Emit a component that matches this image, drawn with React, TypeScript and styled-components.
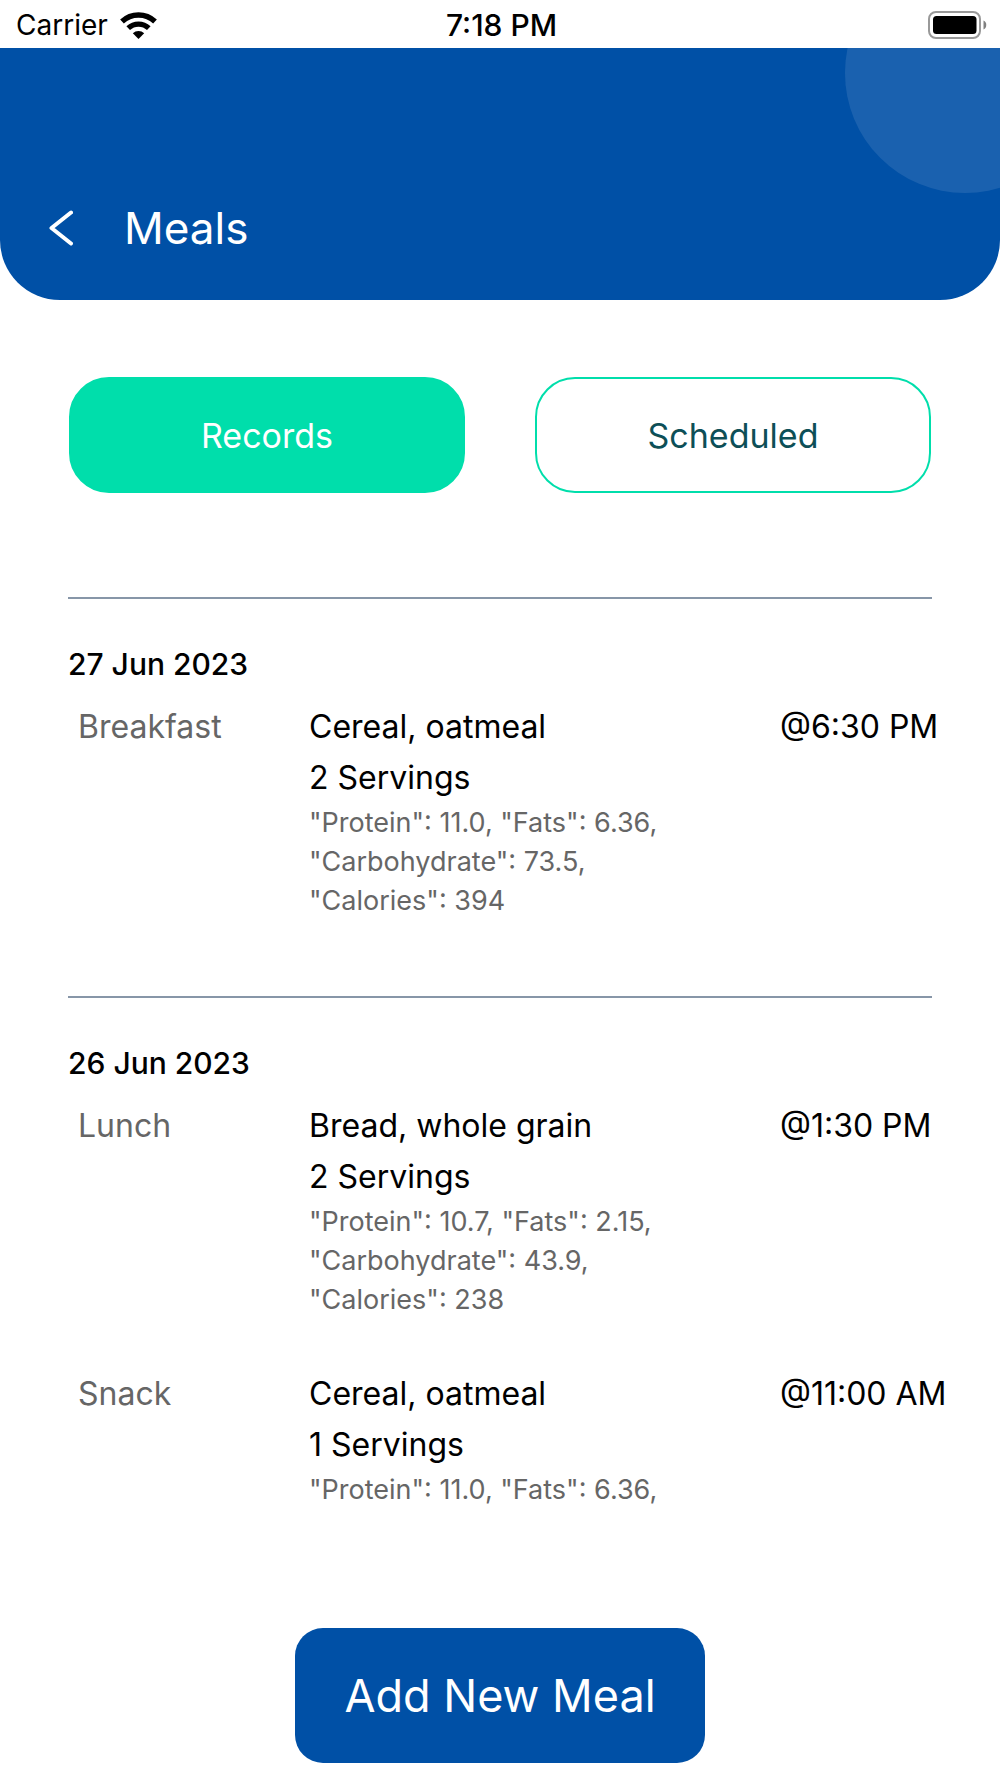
import React, { useState } from "react";
import styled, { createGlobalStyle } from "styled-components";

const color = {
  blue: "#0050a6",
  green: "#00deab",
  teal: "#0d4f57",
  grey: "#666666",
  rule: "#8796a8",
};

const GlobalStyle = createGlobalStyle`
  *, *::before, *::after { box-sizing: border-box; }
  body {
    margin: 0;
    background: #ffffff;
    color: #000000;
    font-family: Inter, "Liberation Sans", sans-serif;
    font-size: 32px;
    line-height: 51px;
  }
  button { font: inherit; cursor: pointer; }
`;

const Screen = styled.div`
  display: flex;
  flex-direction: column;
  height: 100vh;
`;

const StatusBar = styled.div`
  display: grid;
  grid-template-columns: 1fr auto 1fr;
  align-items: center;
  flex: none;
  height: 48px;
  padding: 0 13px 0 16px;
  font-size: 28px;
  line-height: 50px;
`;

const Carrier = styled.div`
  display: flex;
  align-items: center;
  gap: 12px;
`;

const Clock = styled.time`
  font-size: 30px;
  font-weight: 500;
`;

const Battery = styled.svg`
  justify-self: end;
`;

const Header = styled.header`
  position: relative;
  display: flex;
  align-items: flex-end;
  gap: 42px;
  flex: none;
  height: 252px;
  padding: 0 40px 40px;
  overflow: hidden;
  border-radius: 0 0 60px 60px;
  background: ${color.blue};
  color: #ffffff;

  &::before {
    content: "";
    position: absolute;
    top: -95px;
    right: -85px;
    width: 240px;
    height: 240px;
    border-radius: 50%;
    background: rgba(255, 255, 255, 0.1);
  }
`;

const BackButton = styled.button`
  display: flex;
  align-items: center;
  justify-content: center;
  width: 42px;
  height: 64px;
  padding: 0;
  border: 0;
  background: none;
  color: inherit;
`;

const Title = styled.h1`
  margin: 0;
  font-size: 44px;
  font-weight: 400;
  line-height: 64px;
`;

const Tabs = styled.div`
  display: flex;
  gap: 70px;
  flex: none;
  padding: 77px 69px 104px;
`;

const Tab = styled.button<{ $active: boolean }>`
  flex: 1;
  height: 116px;
  padding: 0;
  border: 2px solid ${color.green};
  border-radius: 40px;
  background: ${(p) => (p.$active ? color.green : "#ffffff")};
  color: ${(p) => (p.$active ? "#ffffff" : color.teal)};
  font-size: 34px;
`;

const DayList = styled.main`
  flex: 1;
  min-height: 0;
  padding: 0 68px;
  overflow-y: auto;
  scrollbar-width: none;
`;

const Day = styled.section`
  padding: 40px 0 27px;
  border-top: 2px solid ${color.rule};
`;

const DayTitle = styled.h2`
  margin: 0 0 11px;
  font-size: 30px;
  font-weight: 500;
`;

const Meal = styled.article`
  display: grid;
  grid-template-columns: 231px 1fr 152px;
  padding: 0 0 49px 10px;
`;

const MealKind = styled.span`
  color: ${color.grey};
`;

const Line = styled.div``;

const Nutrient = styled.div`
  color: ${color.grey};
  font-size: 27px;
  line-height: 39px;
`;

const MealTime = styled.time`
  white-space: nowrap;
`;

const Footer = styled.footer`
  display: flex;
  justify-content: center;
  flex: none;
  padding: 100px 20px 15px;
`;

const AddButton = styled.button`
  height: 135px;
  min-width: 410px;
  padding: 0 40px;
  border: 0;
  border-radius: 28px;
  background: ${color.blue};
  color: #ffffff;
  font-size: 45px;
`;

type MealRecord = {
  kind: string;
  food: string;
  servings: number;
  nutrients: string[];
  time: string;
};

const days: { date: string; meals: MealRecord[] }[] = [
  {
    date: "27 Jun 2023",
    meals: [
      {
        kind: "Breakfast",
        food: "Cereal, oatmeal",
        servings: 2,
        nutrients: ['"Protein": 11.0, "Fats": 6.36,', '"Carbohydrate": 73.5,', '"Calories": 394'],
        time: "6:30 PM",
      },
    ],
  },
  {
    date: "26 Jun 2023",
    meals: [
      {
        kind: "Lunch",
        food: "Bread, whole grain",
        servings: 2,
        nutrients: ['"Protein": 10.7, "Fats": 2.15,', '"Carbohydrate": 43.9,', '"Calories": 238'],
        time: "1:30 PM",
      },
      {
        kind: "Snack",
        food: "Cereal, oatmeal",
        servings: 1,
        nutrients: ['"Protein": 11.0, "Fats": 6.36,'],
        time: "11:00 AM",
      },
    ],
  },
];

const tabs = ["Records", "Scheduled"];

export default function App() {
  const [active, setActive] = useState("Records");

  return (
    <Screen>
      <GlobalStyle />
      <StatusBar>
        <Carrier>
          <span>Carrier</span>
          <svg width="37" height="27" viewBox="0 0 37 27" fill="none" aria-hidden="true">
            <path d="M2 9.5A24 24 0 0 1 35 9.5" stroke="#000" strokeWidth="5.4" />
            <path d="M8.2 16.2A15 15 0 0 1 28.8 16.2" stroke="#000" strokeWidth="5.2" />
            <path d="M18.5 27L12.8 21.2A8.2 8.2 0 0 1 24.2 21.2Z" fill="#000" />
          </svg>
        </Carrier>
        <Clock>7:18 PM</Clock>
        <Battery width="59" height="28" viewBox="0 0 59 28" role="img" aria-label="Battery full">
          <rect x="1" y="1" width="51" height="26" rx="7" fill="none" stroke="#999" strokeWidth="2" />
          <rect x="5" y="5" width="43.5" height="18" rx="3.5" fill="#000" />
          <path d="M55.5 9.5C59.2 11 59.2 17 55.5 18.5Z" fill="#808080" />
        </Battery>
      </StatusBar>

      <Header>
        <BackButton aria-label="Back">
          <svg width="24" height="36" viewBox="0 0 24 36" fill="none" aria-hidden="true">
            <path
              d="M22 2.5L2.5 18L22 33.5"
              stroke="currentColor"
              strokeWidth="4"
              strokeLinecap="round"
              strokeLinejoin="round"
            />
          </svg>
        </BackButton>
        <Title>Meals</Title>
      </Header>

      <Tabs>
        {tabs.map((name) => (
          <Tab key={name} $active={name === active} aria-pressed={name === active} onClick={() => setActive(name)}>
            {name}
          </Tab>
        ))}
      </Tabs>

      <DayList>
        {days.map((day) => (
          <Day key={day.date}>
            <DayTitle>{day.date}</DayTitle>
            {day.meals.map((meal) => (
              <Meal key={meal.kind}>
                <MealKind>{meal.kind}</MealKind>
                <div>
                  <Line>{meal.food}</Line>
                  <Line>{`${meal.servings} Servings`}</Line>
                  {meal.nutrients.map((text) => (
                    <Nutrient key={text}>{text}</Nutrient>
                  ))}
                </div>
                <MealTime>{`@${meal.time}`}</MealTime>
              </Meal>
            ))}
          </Day>
        ))}
      </DayList>

      <Footer>
        <AddButton>Add New Meal</AddButton>
      </Footer>
    </Screen>
  );
}
